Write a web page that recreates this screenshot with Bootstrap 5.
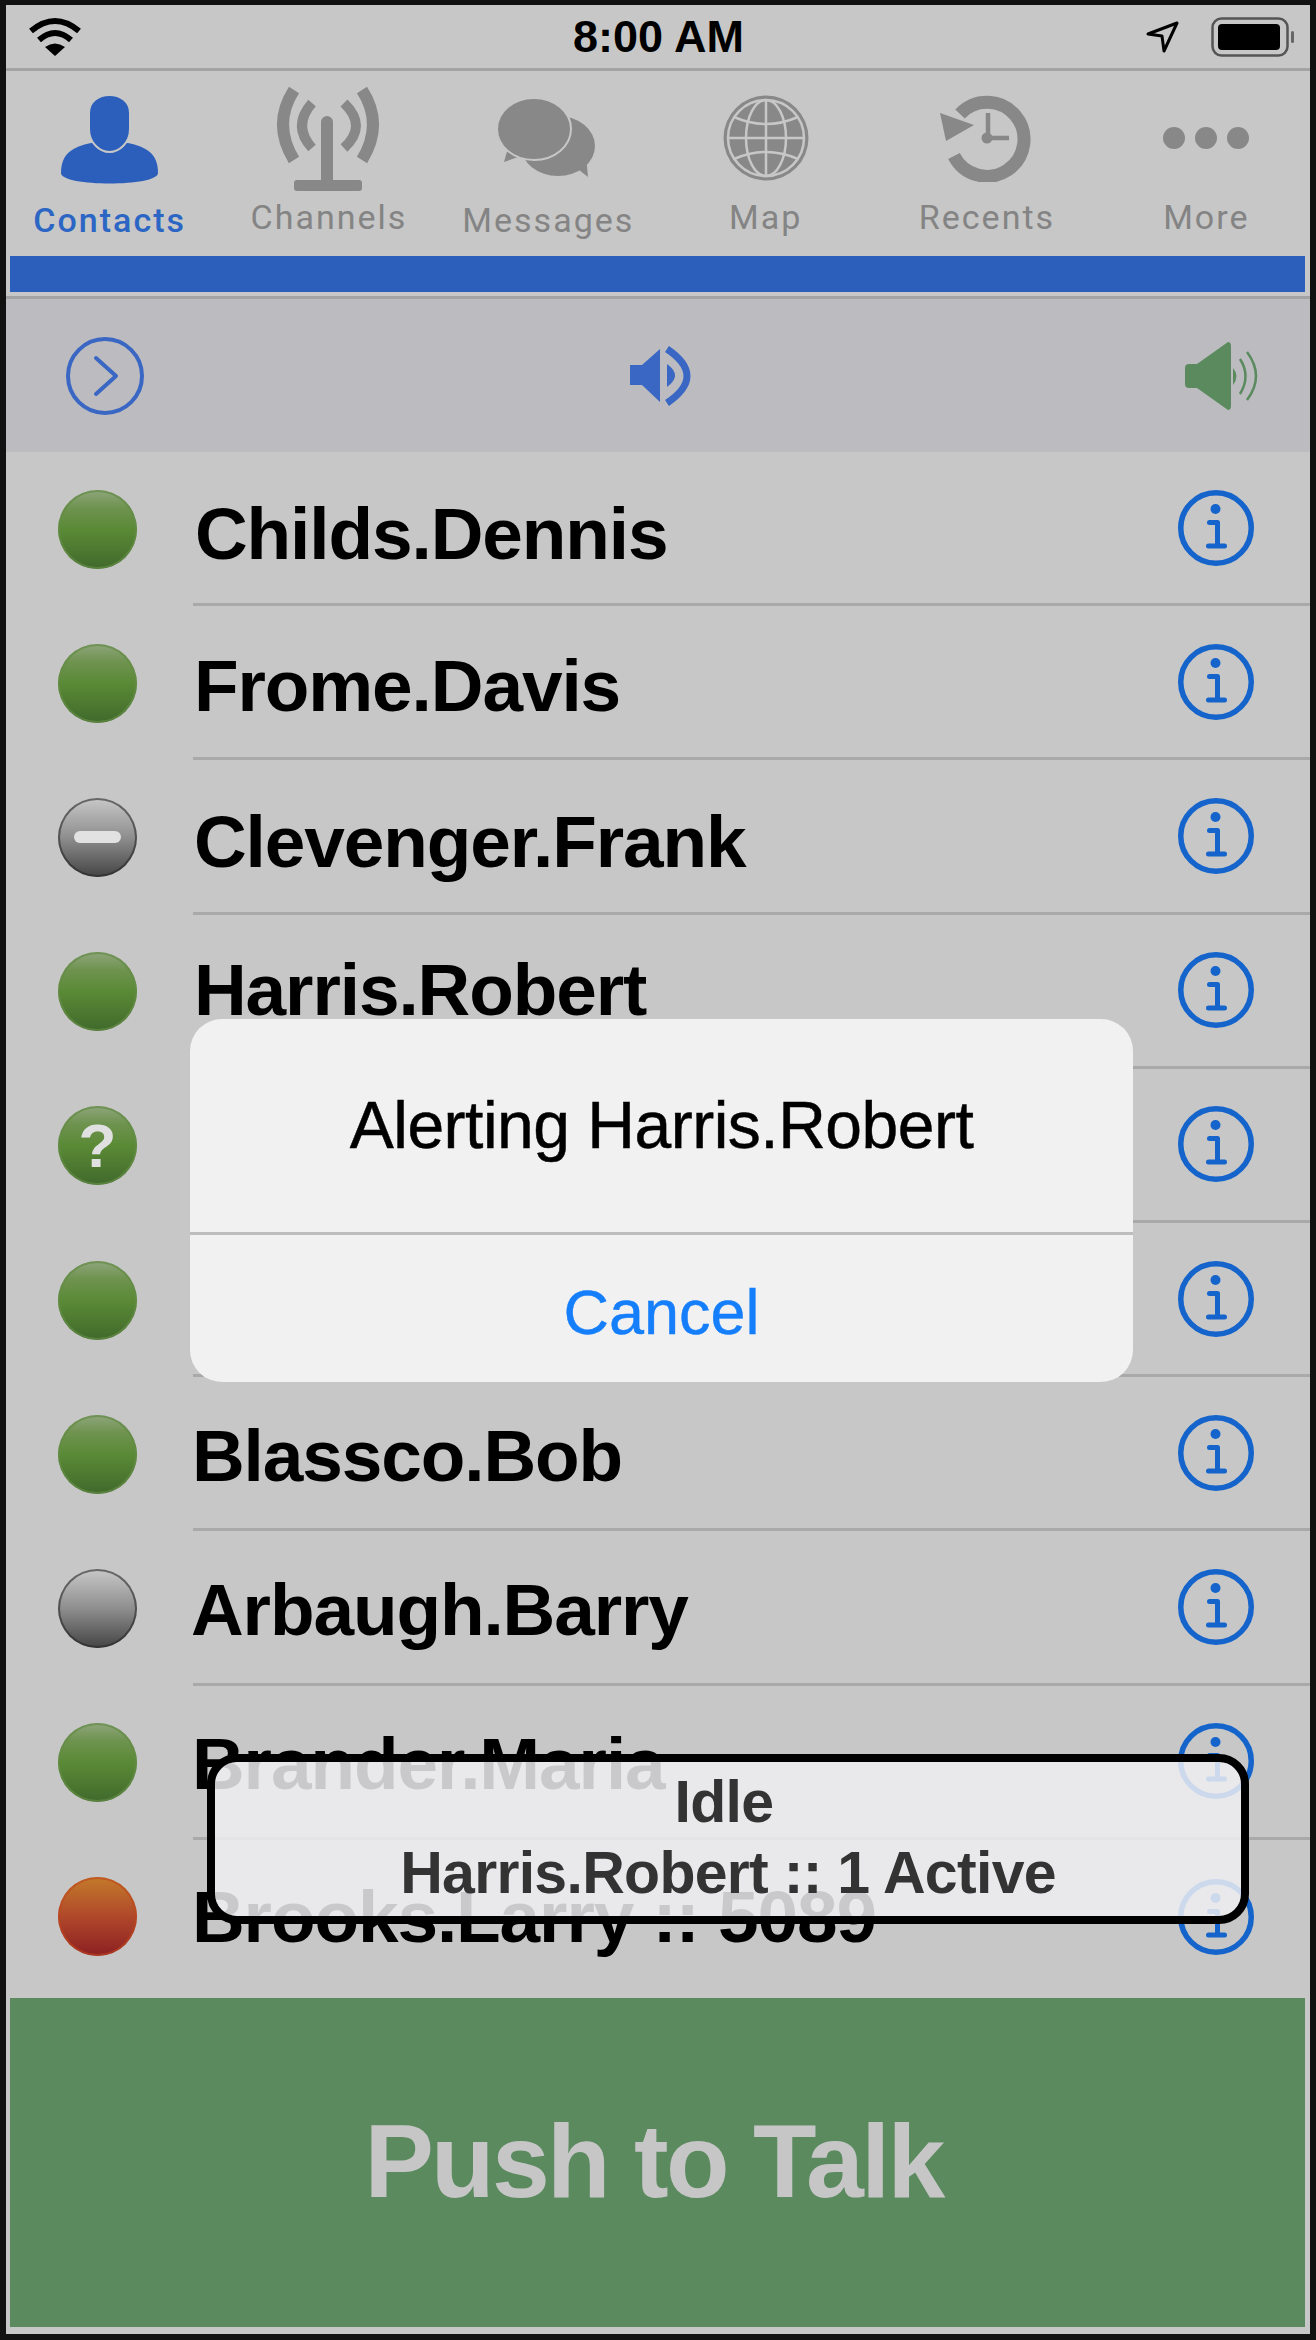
<!DOCTYPE html>
<html lang="en">
<head>
    <meta charset="UTF-8">
    <meta name="viewport" content="width=device-width, initial-scale=1">
    <title>Contacts</title>
    <link href="https://cdn.jsdelivr.net/npm/bootstrap@5.3.0/dist/css/bootstrap.min.css" rel="stylesheet">
    <style>
        body {
            margin: 0;
            background-color: #c7c7c7;
            font-family: "Liberation Sans", Arial, sans-serif;
        }
        .phone-frame {
            width: 1316px;
            height: 2340px;
            border: 6px solid #111;
            border-top-width: 5px;
            background-color: #c7c7c7;
            overflow: hidden;
        }
        .status-strip {
            height: 66px;
            flex: none;
            border-bottom: 3px solid #a3a3a3;
            padding: 0 15px 0 23px;
        }
        .status-time {
            font-size: 45px;
            font-weight: 700;
            color: #000;
            line-height: 1;
            margin-left: 90px;
        }
        .status-right {
            gap: 31px;
        }
        .tab-strip {
            margin-left: -6px;
            margin-right: -6px;
            height: 185px;
            flex: none;
            padding-top: 11px;
        }
        .tab-glyph {
            height: 112px;
        }
        .tab-label {
            font-family: Roboto, "Liberation Sans", sans-serif;
            font-size: 34px;
            letter-spacing: 2px;
            line-height: 40px;
            color: #848484;
            margin-top: 3px;
        }
        .tab-label.is-active {
            color: #2c66c4;
            font-weight: 500;
        }
        .accent-bar {
            height: 36px;
            flex: none;
            margin: 0 5px 0 4px;
            background-color: #2c5fbb;
        }
        .tool-strip {
            height: 156px;
            flex: none;
            margin-top: 4px;
            border-top: 3px solid #a3a3a3;
            background-color: #bcbcc0;
            padding: 0 49px 0 60px;
        }
        .contact-list {
            background: transparent;
            border-radius: 0;
        }
        .contact-row {
            height: 154.2px;
            background: transparent;
            border: 0;
            padding: 0;
            display: flex;
        }
        .dot-cell {
            width: 187px;
            flex: none;
            padding-left: 52px;
        }
        .presence-dot {
            width: 79px;
            height: 79px;
            border-radius: 50%;
            color: #e0e0e0;
            font-size: 62px;
            font-weight: 700;
            line-height: 1;
        }
        .dot-green {
            background: linear-gradient(#8fa67c 0%, #6f9350 22%, #5a8a36 50%, #40692b 100%);
            box-shadow: inset 0 0 0 2px rgba(100, 140, 70, .7);
        }
        .dot-grey {
            background: linear-gradient(#c8c8c8 0%, #8e8e8e 50%, #444 100%);
            box-shadow: inset 0 0 0 2px rgba(40, 40, 40, .6);
        }
        .dot-red {
            background: linear-gradient(#c37a2a 0%, #b0482a 50%, #8c1f22 100%);
            box-shadow: inset 0 0 0 2px rgba(190, 70, 30, .6);
        }
        .minus-pill {
            width: 47px;
            height: 12px;
            border-radius: 6px;
            background-color: #e2e2e2;
        }
        .name-cell {
            border-bottom: 3px solid #a9a9a9;
            padding: 0 56px 0 2px;
        }
        .contact-row:last-child .name-cell {
            border-bottom: 0;
        }
        .contact-name {
            font-size: 73px;
            font-weight: 700;
            letter-spacing: -1.1px;
            color: #000;
            line-height: 1;
            padding-top: 5px;
        }
        .talk-button {
            flex: 1 1 auto;
            margin: 4px 5px 7px 4px;
            padding-right: 20px;
            padding-top: 4px;
            background-color: #5a8a5e;
            color: #c6c6c6;
            font-size: 104px;
            letter-spacing: -2.7px;
            font-weight: 700;
            border-radius: 0;
        }
        .alert-sheet {
            position: absolute;
            left: 184px;
            top: 1014px;
            width: 943px;
            height: 363px;
            border-radius: 32px;
            background-color: #f1f1f1;
            color: #000;
            font-size: 66px;
            letter-spacing: -.5px;
            -webkit-text-stroke: .5px #000;
        }
        .alert-title {
            height: 216px;
            border-bottom: 3px solid #bdbdbd;
        }
        .alert-cancel {
            color: #157efb;
            font-size: 63px;
            letter-spacing: 0;
            -webkit-text-stroke: .4px #157efb;
            height: 145px;
            padding-top: 9px;
        }
        .state-toast {
            position: absolute;
            left: 201px;
            top: 1749px;
            width: 1042px;
            height: 170px;
            padding-top: 5px;
            border: 8px solid #000;
            border-radius: 30px;
            background-color: rgba(240, 240, 243, .84);
            color: #333;
            font-size: 59px;
            letter-spacing: -.7px;
            font-weight: 700;
            line-height: 71px;
        }
        .idle-line {
            margin-right: 8px;
        }
        .label-low {
            margin-top: 6px;
        }
    </style>
</head>
<body>

<div class="phone-frame d-flex flex-column position-relative">

    <div class="status-strip d-flex align-items-center justify-content-between">
        <svg width="52" height="40" viewBox="0 0 52 40">
            <path d="M2 14 Q26 -6 50 14" fill="none" stroke="#000" stroke-width="6"/>
            <path d="M10 23 Q26 9 42 23" fill="none" stroke="#000" stroke-width="6"/>
            <path d="M26 39 L16 30 Q26 23 36 30 Z" fill="#000"/>
        </svg>
        <div class="status-time">8:00 AM</div>
        <div class="status-right d-flex align-items-center">
            <svg width="34" height="32" viewBox="0 0 34 32">
                <path d="M2 13 L31 2 L18 30 L16 15 Z" fill="none" stroke="#000" stroke-width="3" stroke-linejoin="round"/>
            </svg>
            <svg width="84" height="40" viewBox="0 0 84 40">
                <rect x="1.5" y="1.5" width="75" height="37" rx="9" fill="none" stroke="#555" stroke-width="2.5"/>
                <rect x="7" y="7" width="62" height="26" rx="4" fill="#000"/>
                <rect x="80" y="14" width="3" height="12" rx="1.5" fill="#666"/>
            </svg>
        </div>
    </div>

    <div class="row g-0 tab-strip text-center">
        <div class="col-2">
            <div class="tab-glyph d-flex align-items-center justify-content-center">
                <svg class="mt-1" width="97" height="90" viewBox="0 0 97 90">
                    <path d="M0 78 C0 58 12 52 30 48 L67 48 C85 52 97 58 97 78 C97 92 0 92 0 78 Z" fill="#2c5fbb"/>
                    <path d="M28 18 C28 -6 69 -6 69 18 L69 34 C69 48 58 57 48.500 57 C39 57 28 48 28 34 Z" fill="#2c5fbb" stroke="#c7c7c7" stroke-width="2"/>
                </svg>
            </div>
            <div class="tab-label is-active label-low">Contacts</div>
        </div>
        <div class="col-2">
            <div class="tab-glyph d-flex align-items-center justify-content-center">
                <svg width="105" height="105" viewBox="0 0 105 105">
                    <g fill="none" stroke="#888">
                        <path d="M18 4 Q-4 38 18 74" stroke-width="12"/>
                        <path d="M86 4 Q108 38 86 74" stroke-width="12"/>
                        <path d="M36 17 Q16 40 36 62" stroke-width="10"/>
                        <path d="M68 17 Q92 40 68 62" stroke-width="10"/>
                    </g>
                    <path d="M45 36 A6 6 0 0 1 57 36 L57 95 L45 95 Z" fill="#888"/>
                    <rect x="18" y="94" width="68" height="11" rx="3" fill="#888"/>
                </svg>
            </div>
            <div class="tab-label">Channels</div>
        </div>
        <div class="col-2">
            <div class="tab-glyph d-flex align-items-center justify-content-center">
                <svg class="me-1" width="100" height="80" viewBox="0 0 100 80">
                    <ellipse cx="62" cy="48" rx="37" ry="30" fill="#888"/>
                    <path d="M78 68 L92 79 L90 58 Z" fill="#888"/>
                    <path d="M12 50 L8 64 L28 57 Z" fill="#888"/>
                    <ellipse cx="38" cy="31" rx="37" ry="31" fill="#888" stroke="#c7c7c7" stroke-width="2"/>
                </svg>
            </div>
            <div class="tab-label label-low">Messages</div>
        </div>
        <div class="col-2 pe-1">
            <div class="tab-glyph d-flex align-items-center justify-content-center">
                <svg width="86" height="86" viewBox="0 0 86 86">
                    <circle cx="43" cy="43" r="42.500" fill="#888"/>
                    <g fill="none" stroke="#c7c7c7" stroke-width="2.500">
                        <circle cx="43" cy="43" r="38"/>
                        <ellipse cx="43" cy="43" rx="20" ry="38"/>
                        <path d="M43 5 V81 M5 43 H81"/>
                        <path d="M11 22 Q43 36 75 22 M11 64 Q43 50 75 64"/>
                    </g>
                </svg>
            </div>
            <div class="tab-label">Map</div>
        </div>
        <div class="col-2">
            <div class="tab-glyph d-flex align-items-center justify-content-center">
                <svg width="94" height="88" viewBox="0 0 94 88">
                    <path d="M14 62 A37 37 0 1 0 20 20" fill="none" stroke="#888" stroke-width="13"/>
                    <path d="M0 19 L34 31 L6 47 Z" fill="#888"/>
                    <path d="M48 19 V44 H69" fill="none" stroke="#888" stroke-width="4.500"/>
                    <circle cx="47" cy="44" r="5.500" fill="#888"/>
                </svg>
            </div>
            <div class="tab-label">Recents</div>
        </div>
        <div class="col-2">
            <div class="tab-glyph d-flex align-items-center justify-content-center">
                <svg width="86" height="24" viewBox="0 0 86 24">
                    <circle cx="11" cy="12" r="11" fill="#888"/>
                    <circle cx="43" cy="12" r="11" fill="#888"/>
                    <circle cx="75" cy="12" r="11" fill="#888"/>
                </svg>
            </div>
            <div class="tab-label">More</div>
        </div>
    </div>

    <div class="accent-bar"></div>

    <div class="tool-strip d-flex align-items-center justify-content-between">
        <svg width="78" height="78" viewBox="0 0 78 78">
            <circle cx="39" cy="39" r="37" fill="none" stroke="#3a66c4" stroke-width="4"/>
            <path d="M30 21 L50 39 L30 57" fill="none" stroke="#3a66c4" stroke-width="4" stroke-linecap="round" stroke-linejoin="round"/>
        </svg>
        <svg class="me-2" width="61" height="60" viewBox="0 0 61 60">
            <path d="M0 19 H12 L30 3 V56 L12 39 H0 Z" fill="#3a66c4"/>
            <path d="M37 18 Q53 29.500 37 41 Z" fill="#3a66c4"/>
            <path d="M37 3 Q77 30 37 57" fill="none" stroke="#3a66c4" stroke-width="7"/>
        </svg>
        <svg width="76" height="68" viewBox="0 0 76 68">
            <path d="M4 22 H12 L43 0 Q46 0 46 4 V64 Q46 68 43 68 L12 46 H4 Q0 46 0 42 V26 Q0 22 4 22 Z" fill="#5a8a5e"/>
            <path d="M48 26 Q55 34 48 43 Z" fill="#5a8a5e"/>
            <path d="M55 17 Q66 34 55 52" fill="none" stroke="#5a8a5e" stroke-width="2.500"/>
            <path d="M62 10 Q80 34 62 58" fill="none" stroke="#5a8a5e" stroke-width="2.500"/>
        </svg>
    </div>

    <ul class="list-group list-group-flush contact-list" id="contact-list"></ul>

    <button class="btn talk-button d-flex align-items-center justify-content-center">Push to Talk</button>

    <div class="alert-sheet">
        <div class="alert-title d-flex align-items-center justify-content-center">Alerting Harris.Robert</div>
        <div class="alert-cancel d-flex align-items-center justify-content-center">Cancel</div>
    </div>

    <div class="state-toast text-center">
        <div class="idle-line">Idle</div>
        <div>Harris.Robert :: 1 Active</div>
    </div>
</div>

<script>
// rows 5 and 6 sit fully behind the alert sheet, no readable name there
const contacts = [
    { name: 'Childs.Dennis', dot: 'green', dx: 0, dy: 3 },
    { name: 'Frome.Davis', dot: 'green', dx: -1, dy: 1 },
    { name: 'Clevenger.Frank', dot: 'grey', mark: 'minus', dx: -1, dy: 3 },
    { name: 'Harris.Robert', dot: 'green', dx: -1, dy: -3 },
    { name: '', dot: 'green', mark: '?', dx: 0, dy: 0 },
    { name: '', dot: 'green', dx: 0, dy: 0 },
    { name: 'Blassco.Bob', dot: 'green', dx: -3, dy: 0 },
    { name: 'Arbaugh.Barry', dot: 'grey', dx: -4, dy: 0 },
    { name: 'Brander.Maria', dot: 'green', dx: -3, dy: 0 },
    { name: 'Brooks.Larry :: 5089', dot: 'red', dx: -3, dy: -3 }
];

const infoIcon = `
    <svg class="ms-auto" width="76" height="76" viewBox="0 0 76 76">
        <circle cx="38" cy="38" r="35.250" fill="none" stroke="#1464cc" stroke-width="5.500"/>
        <circle cx="37.500" cy="19" r="5" fill="#1464cc"/>
        <path d="M31.500 32.500 H39.500 V56 M30.500 56 H46.500" fill="none" stroke="#1464cc" stroke-width="5" stroke-linecap="round" stroke-linejoin="round"/>
    </svg>`;

const list = document.getElementById('contact-list');
contacts.forEach(contact => {
    let mark = '';
    if (contact.mark === 'minus') mark = '<div class="minus-pill"></div>';
    else if (contact.mark) mark = contact.mark;
    const row = document.createElement('li');
    row.className = 'list-group-item contact-row';
    row.innerHTML = `
        <div class="dot-cell d-flex align-items-center">
            <div class="presence-dot dot-${contact.dot} d-flex align-items-center justify-content-center">${mark}</div>
        </div>
        <div class="name-cell flex-grow-1 d-flex align-items-center">
            <span class="contact-name" style="margin-left:${contact.dx}px;margin-top:${contact.dy * 2}px">${contact.name}</span>
            ${infoIcon}
        </div>`;
    list.appendChild(row);
});
</script>

<script src="https://cdn.jsdelivr.net/npm/bootstrap@5.3.0/dist/js/bootstrap.bundle.min.js"></script>
</body>
</html>
